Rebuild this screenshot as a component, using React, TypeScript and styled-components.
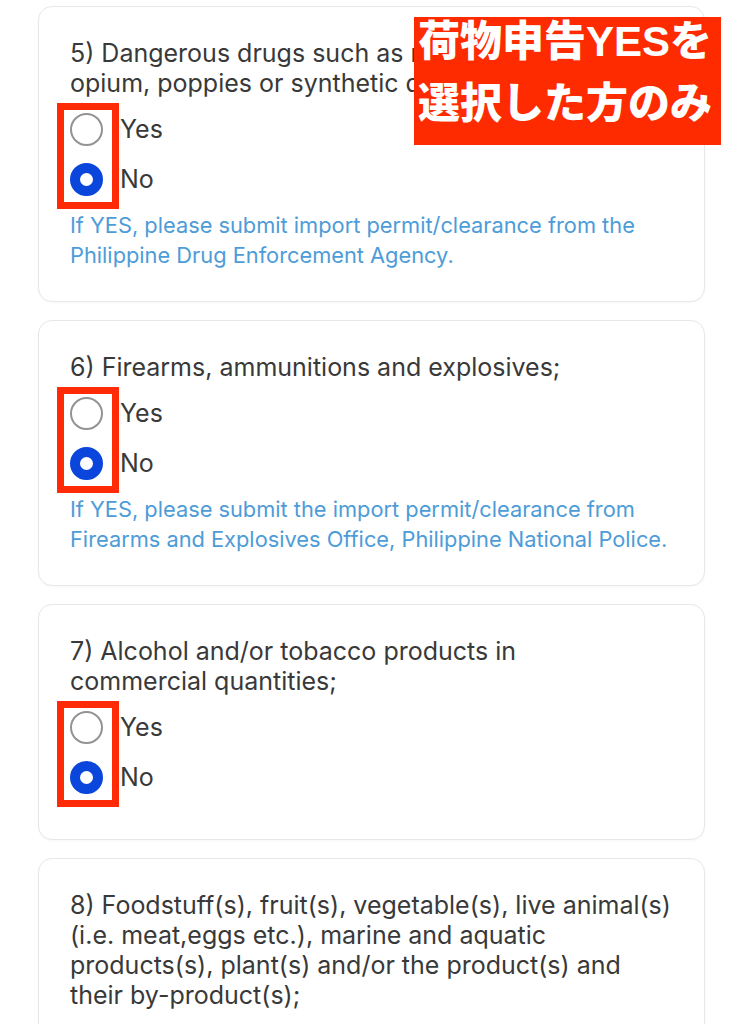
import React from "react";
import styled, { createGlobalStyle } from "styled-components";

const GlobalStyle = createGlobalStyle`
  html, body {
    margin: 0;
    padding: 0;
    background: #ffffff;
  }
  body {
    font-family: Inter, "Noto Sans", sans-serif;
    -webkit-font-smoothing: antialiased;
  }
  * { box-sizing: border-box; }
`;

const Page = styled.main`
  position: relative;
  display: flex;
  flex-direction: column;
  gap: 18px;
  padding: 6px 38px 40px;
`;

const Card = styled.section`
  background: #ffffff;
  border: 1px solid #e7e7e7;
  border-radius: 14px;
  padding: 31px;
  box-shadow: 0 1px 2px rgba(0, 0, 0, 0.03);
`;

const Question = styled.p<{ $maxWidth?: number }>`
  margin: 0;
  max-width: ${(p) => (p.$maxWidth ? `${p.$maxWidth}px` : "none")};
  font-size: 25px;
  line-height: 30px;
  font-weight: 400;
  color: #393939;
`;

const RadioGroup = styled.div`
  position: relative;
  display: flex;
  flex-direction: column;
  margin: 6px 0;
`;

const Option = styled.label`
  display: flex;
  align-items: center;
  gap: 17px;
  height: 50px;
  font-size: 25px;
  color: #393939;
  cursor: pointer;
`;

const Radio = styled.input`
  appearance: none;
  -webkit-appearance: none;
  margin: 0;
  flex: none;
  width: 33px;
  height: 33px;
  border-radius: 50%;
  border: 2.5px solid #939393;
  background: #ffffff;

  &:checked {
    border: 10.5px solid #0a46dc;
  }
`;

const Highlight = styled.span`
  position: absolute;
  left: -13px;
  top: -1px;
  width: 62px;
  height: 106px;
  border: 7px solid #ff2b06;
  pointer-events: none;
`;

const Hint = styled.p`
  margin: 0;
  font-size: 21.8px;
  line-height: 30px;
  color: #4d9cd8;
`;

const Callout = styled.div`
  position: absolute;
  top: 17px;
  right: 22px;
  width: 307px;
  height: 128px;
  display: flex;
  flex-direction: column;
  gap: 12px;
  padding: 0 4px;
  background: #ff2b00;
  color: #ffffff;
  font-family: "Liberation Sans", "Noto Sans CJK JP", sans-serif;
  font-weight: 900;
  font-size: 42px;
  line-height: 50px;
  white-space: nowrap;
`;

const CalloutLine = styled.span`
  display: block;
`;

type Item = {
  id: string;
  question: string;
  hint?: string;
  marked: boolean;
  maxWidth?: number;
};

const items: Item[] = [
  {
    id: "q5",
    question:
      "5) Dangerous drugs such as morphine, marijuana, opium, poppies or synthetic drugs;",
    hint:
      "If YES, please submit import permit/clearance from the Philippine Drug Enforcement Agency.",
    marked: true,
  },
  {
    id: "q6",
    question: "6) Firearms, ammunitions and explosives;",
    hint:
      "If YES, please submit the import permit/clearance from Firearms and Explosives Office, Philippine National Police.",
    marked: true,
  },
  {
    id: "q7",
    question: "7) Alcohol and/or tobacco products in commercial quantities;",
    marked: true,
    maxWidth: 560,
  },
  {
    id: "q8",
    question:
      "8) Foodstuff(s), fruit(s), vegetable(s), live animal(s) (i.e. meat,eggs etc.), marine and aquatic products(s), plant(s) and/or the product(s) and their by-product(s);",
    marked: false,
  },
];

export default function App() {
  return (
    <>
      <GlobalStyle />
      <Page>
        {items.map((item) => (
          <Card key={item.id}>
            <Question $maxWidth={item.maxWidth}>{item.question}</Question>
            <RadioGroup>
              <Option>
                <Radio type="radio" name={item.id} value="yes" />
                Yes
              </Option>
              <Option>
                <Radio type="radio" name={item.id} value="no" defaultChecked />
                No
              </Option>
              {item.marked && <Highlight />}
            </RadioGroup>
            {item.hint && <Hint>{item.hint}</Hint>}
          </Card>
        ))}
        <Callout>
          <CalloutLine>荷物申告YESを</CalloutLine>
          <CalloutLine>選択した方のみ</CalloutLine>
        </Callout>
      </Page>
    </>
  );
}
